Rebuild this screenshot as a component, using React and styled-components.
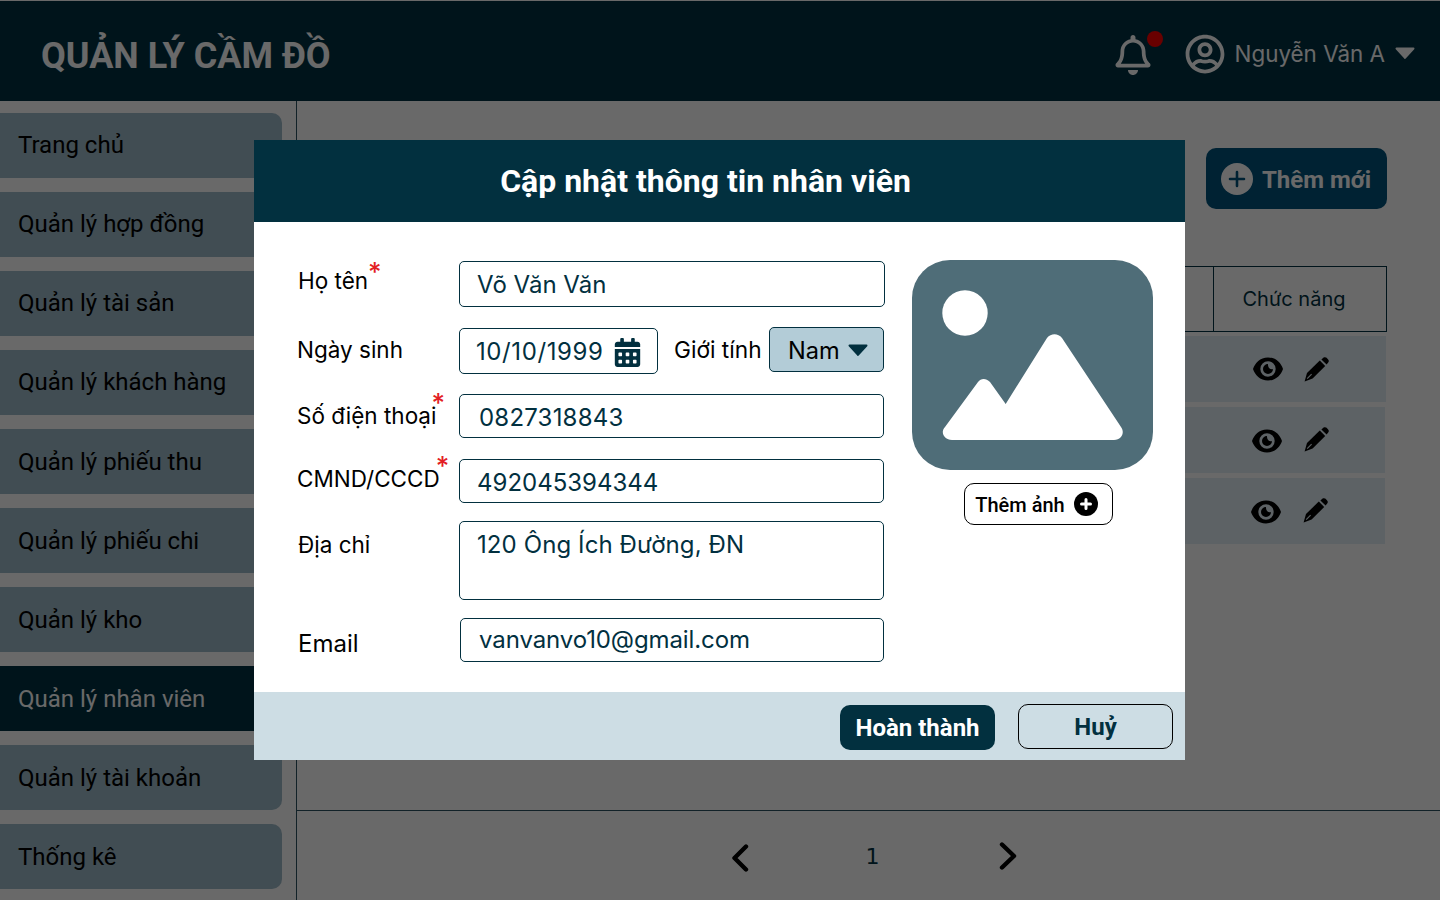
import React from "react";
import styled, { createGlobalStyle } from "styled-components";
import { FaRegBell, FaRegUserCircle, FaCalendarAlt } from "react-icons/fa";

const Global = createGlobalStyle`
  html, body { margin: 0; padding: 0; height: 900px; overflow: hidden; background: #fff; }
  * { box-sizing: border-box; }
  body { font-family: "Roboto", "Liberation Sans", sans-serif; }
`;
const Page = styled.div`
  position: relative; width: 1440px; height: 900px; overflow: hidden;
  display: flex; flex-direction: column; background: #fff;
`;
const TopBar = styled.header`
  height: 100px; margin-top: 1px; flex: none; background: #003142; color: #fff;
  display: flex; align-items: center; padding: 7px 25px 0 41px;
`;
const Brand = styled.div` font: 700 36px/1 "Roboto", sans-serif; flex: 1; margin-top: 2px; `;
const Bell = styled.div` position: relative; display: flex; width: 40px; margin-right: 32px; `;
const Dot = styled.span`
  position: absolute; left: 34px; top: -4px; width: 16px; height: 16px; border-radius: 50%; background: #ff0000;
`;
const UserName = styled.span`
  font: 400 22.4px/1 "Inter", sans-serif; margin: 2px 10px 0; white-space: nowrap;
`;
const UserBlock = styled.div` display: flex; align-items: center; margin-top: -2px; `;
const Body = styled.div` flex: 1; display: flex; min-height: 0; `;
const Side = styled.nav`
  width: 297px; flex: none; padding: 12px 14px 0 0; border-right: 1px solid #2d5362;
  display: flex; flex-direction: column; gap: 14px;
`;
const SideItem = styled.div`
  height: 65px; flex: none; padding: 0 18px ${p => (p.$lift ? 2 : 0)}px; display: flex; align-items: center;
  font: 400 24px/1 "Roboto", sans-serif; border-radius: 0 10px 10px 0;
  background: ${p => (p.$active ? "#003142" : "#9fbac9")};
  color: ${p => (p.$active ? "#fff" : "#000")};
`;
const Main = styled.main` flex: 1; display: flex; flex-direction: column; min-width: 0; `;
const Toolbar = styled.div` display: flex; justify-content: flex-end; padding: 47px 53px 0 0; `;
const AddBtn = styled.button`
  width: 181px; height: 61px; border: 0; border-radius: 10px; background: #00537c; color: #fff;
  display: flex; align-items: center; gap: 9px; padding: 0 15px;
  font: 700 24px/1 "Roboto", sans-serif;
`;
const AddLabel = styled.span` margin-top: 2px; `;
const Table = styled.div` margin: 57px 53px 0 43px; display: flex; flex-direction: column; `;
const HeadRow = styled.div`
  height: 66px; display: flex; border: 1px solid #003142; margin-bottom: 4px;
`;
const HeadCell = styled.div`
  flex: ${p => (p.$grow ? 1 : "none")}; width: ${p => (p.$grow ? "auto" : "173px")};
  border-left: ${p => (p.$grow ? "0" : "1px solid #003142")};
  display: flex; align-items: center; justify-content: center; padding-right: 12px;
  font: 400 20px/1 "Inter", sans-serif; color: #003142;
`;
const Row = styled.div`
  display: flex; align-items: center; justify-content: flex-end; background: #e1edf5;
  height: 66px; margin-right: ${p => p.$mr}px; margin-bottom: 5px;
`;
const Actions = styled.div`
  display: flex; align-items: center; gap: ${p => p.$gap}px; width: 172px; padding-left: ${p => p.$pl}px; color: #000;
`;
const IconSlot = styled.span` display: flex; margin-top: ${p => p.$top || 0}px; `;
const Pager = styled.footer`
  margin-top: auto; height: 90px; flex: none; border-top: 1px solid #2d5362;
  display: flex; align-items: center; justify-content: center; gap: 119px; padding: 0 0 0 11px; margin-left: -1px;
`;
const PageNum = styled.span` font: 400 22px/1 "DejaVu Sans", sans-serif; color: #003142; width: 10px; display: flex; justify-content: center; margin-top: 3px; `;
const PagerIcon = styled.span` display: flex; margin: ${p => p.$m}; `;

const Overlay = styled.div`
  position: absolute; inset: 0; background: rgba(0,0,0,.59); padding: 140px 255px 140px 254px; display: flex;
`;
const Modal = styled.section` flex: 1; display: flex; flex-direction: column; background: #fff; `;
const ModalHead = styled.h2`
  margin: 0; height: 82px; flex: none; background: #02303f; color: #fff;
  display: flex; align-items: center; justify-content: center; padding-right: 28px;
  font: 700 32px/1 "Roboto", sans-serif;
`;
const ModalBody = styled.div` flex: 1; display: flex; min-height: 0; `;
const Form = styled.div` width: 631px; flex: none; padding: 39px 0 0 43px; display: flex; flex-direction: column; `;
const FormRow = styled.div` display: flex; align-items: flex-start; margin-top: ${p => p.$mt || 0}px; `;
const Label = styled.label`
  width: 162px; flex: none; font: 400 ${p => p.$size || 22.5}px/29px "Inter", sans-serif; color: #000; white-space: nowrap;
  padding-top: ${p => p.$pt || 0}px; padding-left: ${p => p.$pl || 0}px;
`;
const Req = styled.span`
  color: #e31e24; font: 500 26px/1 "Inter", sans-serif; vertical-align: ${p => p.$up || 8}px; line-height: 0;
  margin-left: ${p => p.$ml || 0}px;
`;
const Field = styled.div`
  height: ${p => p.$h}px; width: ${p => p.$w}px; flex: none;
  margin-left: ${p => p.$ml || 0}px;
  border: 1px solid #02303f; border-radius: 5px; background: #fff; color: #02303f;
  display: flex; align-items: ${p => (p.$top ? "flex-start" : "center")};
  padding: ${p => p.$pad || "0 17px"};
  font: 400 24px/1 "Inter", sans-serif; white-space: nowrap;
  letter-spacing: ${p => p.$ls || 0}px;
`;
const DateField = styled(Field)` justify-content: space-between; `;
const CalendarIcon = styled(FaCalendarAlt)` margin: 1px -2px 0 0; `;
const GenderLabel = styled.span`
  font: 400 22.7px/29px "Inter", sans-serif; color: #000; margin-left: 16px; width: 95px; flex: none; padding-top: 7px;
`;
const Select = styled.div`
  width: 115px; height: 45px; margin-top: -1px; flex: none; border: 1px solid #02303f; border-radius: 5px;
  background: #b3ccd7; color: #000; display: flex; align-items: center; justify-content: space-between;
  padding: 2px 15px 0 18px; font: 400 23.6px/1 "Inter", sans-serif;
`;
const Aside = styled.aside`
  width: 241px; margin-left: 27px; padding-top: 38px; display: flex; flex-direction: column;
`;
const PhotoBtn = styled.button`
  margin: 13px 0 0 52px; width: 149px; height: 42px; border: 1px solid #000; border-radius: 10px; background: #fff; color: #000;
  display: flex; align-items: center; justify-content: center; gap: 9px;
  font: 500 20px/1 "Roboto", sans-serif; padding: 0 4px 0 0;
`;
const PhotoLabel = styled.span` margin-top: 2px; `;
const ModalFoot = styled.div`
  height: 68px; flex: none; background: #cddde4; display: flex; align-items: flex-start; justify-content: flex-end;
  padding: 12px 12px 0 0; gap: 23px;
`;
const Primary = styled.button`
  width: 155px; height: 45px; margin-top: 1px; border: 0; border-radius: 10px; background: #02303f; color: #fff;
  font: 700 24px/1 "Roboto", sans-serif; padding: 0;
`;
const Ghost = styled.button`
  width: 155px; height: 45px; border: 1px solid #000; border-radius: 10px; background: transparent; color: #02303f;
  font: 700 24px/1 "Roboto", sans-serif; padding: 0;
`;

const Caret = ({ w = 20, color = "currentColor" }) => (
  <svg width={w} height={w * 0.62} viewBox="0 0 20 12.4" fill={color} stroke={color} strokeWidth="2" strokeLinejoin="round">
    <path d="M1.5 1.5H18.5L10 10.9Z" />
  </svg>
);
const Chevron = ({ dir }) => (
  <svg width="18" height="28" viewBox="0 0 18 28" fill="none" stroke="#000" strokeWidth="4.4" strokeLinecap="round" strokeLinejoin="round">
    <path d={dir === "left" ? "M15 2.5L3.5 14L15 25.5" : "M3 2.5L15 14L3 25.5"} />
  </svg>
);
const Photo = () => (
  <svg width="241" height="210" viewBox="0 0 241 210">
    <rect width="241" height="210" rx="38" fill="#4f6d78" />
    <circle cx="53" cy="53" r="22.7" fill="#fff" />
    <path fill="#fff" d="M40 180H202C210 180 213 172 209 167L150 78C146 73 139 73 135 78L93.7 144L78 122C74 118 69 118 66 122L33 167C28 172 32 180 40 180Z" />
  </svg>
);
const PlusDisc = () => (
  <svg width="32" height="32" viewBox="0 0 32 32">
    <circle cx="16" cy="16" r="16" fill="#fff" />
    <path d="M16 9V23M9 16H23" stroke="#00537c" strokeWidth="2.6" strokeLinecap="round" />
  </svg>
);
const PlusSmall = () => (
  <svg width="24" height="24" viewBox="0 0 24 24">
    <circle cx="12" cy="12" r="12" fill="#000" />
    <path d="M12 7.5V16.5M7.5 12H16.5" stroke="#fff" strokeWidth="3" strokeLinecap="round" />
  </svg>
);
const Eye = () => (
  <svg width="30" height="24" viewBox="0 0 30 24" fill="currentColor">
    <path fillRule="evenodd" d="M15 0.5C23 0.5 28 6 30 12C28 18 23 23.5 15 23.5C7 23.5 2 18 0 12C2 6 7 0.5 15 0.5ZM15 4.3A7.7 7.7 0 1 0 15 19.7A7.7 7.7 0 1 0 15 4.3Z" />
    <path d="M15 7A5 5 0 1 0 20 12C18.8 12.6 17.2 12.2 16.3 11.2C15.3 10.2 14.9 8.4 15 7Z" />
  </svg>
);
const Pencil = () => (
  <svg width="25" height="25" viewBox="0 0 25 25" fill="currentColor">
    <path d="M0.6 24.4L3 16L15.8 3.6L21.2 9L8.6 21.6Z" />
    <path d="M17.4 2.4L19.6 0.6C20.6 -0.1 21.8 0 22.6 0.8L24.1 2.4C25 3.4 25 4.6 24.2 5.4L22.6 7.6Z" />
    <path d="M3.2 21.6L7.6 17.2" stroke="#e1edf5" strokeWidth="1.1" fill="none" />
  </svg>
);

const menu = ["Trang chủ", "Quản lý hợp đồng", "Quản lý tài sản", "Quản lý khách hàng", "Quản lý phiếu thu", "Quản lý phiếu chi", "Quản lý kho", "Quản lý nhân viên", "Quản lý tài khoản", "Thống kê"];
const rows = [
  { mr: 1, pl: 39, gap: 21, eye: 0, pen: 0 },
  { mr: 2, pl: 39, gap: 22, eye: 2, pen: -2 },
  { mr: 2, pl: 38, gap: 22, eye: 2, pen: -2 },
];

export default function App() {
  return (
    <Page>
      <Global />
      <TopBar>
        <Brand>QUẢN LÝ CẦM ĐỒ</Brand>
        <Bell><FaRegBell size={40} /><Dot /></Bell>
        <UserBlock>
          <FaRegUserCircle size={40} />
          <UserName>Nguyễn Văn A</UserName>
          <Caret />
        </UserBlock>
      </TopBar>
      <Body>
        <Side>
          {menu.map((m, i) => <SideItem key={m} $active={i === 7} $lift={i < 4}>{m}</SideItem>)}
        </Side>
        <Main>
          <Toolbar><AddBtn><PlusDisc /><AddLabel>Thêm mới</AddLabel></AddBtn></Toolbar>
          <Table>
            <HeadRow><HeadCell $grow /><HeadCell>Chức năng</HeadCell></HeadRow>
            {rows.map((r, i) => (
              <Row key={i} $mr={r.mr}>
                <Actions $pl={r.pl} $gap={r.gap}>
                  <IconSlot $top={r.eye}><Eye /></IconSlot>
                  <IconSlot $top={r.pen}><Pencil /></IconSlot>
                </Actions>
              </Row>
            ))}
          </Table>
          <Pager>
            <PagerIcon $m="5px 0 0"><Chevron dir="left" /></PagerIcon>
            <PageNum>1</PageNum>
            <PagerIcon $m="0 0 0 2px"><Chevron dir="right" /></PagerIcon>
          </Pager>
        </Main>
      </Body>
      <Overlay>
        <Modal>
          <ModalHead>Cập nhật thông tin nhân viên</ModalHead>
          <ModalBody>
            <Form>
              <FormRow>
                <Label $pt={5} $pl={1}>Họ tên<Req>*</Req></Label>
                <Field $w={426} $h={46} $pad="2px 17px 0">Võ Văn Văn</Field>
              </FormRow>
              <FormRow $mt={21}>
                <Label $pt={7}>Ngày sinh</Label>
                <DateField $w={199} $h={46} $pad="2px 17px 0 16px" $ls={0.6}>10/10/1999<CalendarIcon size={29} /></DateField>
                <GenderLabel>Giới tính</GenderLabel>
                <Select>Nam<Caret color="#02303f" /></Select>
              </FormRow>
              <FormRow $mt={20}>
                <Label $pt={7}>Số điện thoại<Req $up={12} $ml={-5}>*</Req></Label>
                <Field $w={425} $h={44} $pad="3px 19px 0" $ls={0.2}>0827318843</Field>
              </FormRow>
              <FormRow $mt={21}>
                <Label $pt={5}>CMND/CCCD<Req $up={12} $ml={-4}>*</Req></Label>
                <Field $w={425} $h={44} $pad="3px 17px 0">492045394344</Field>
              </FormRow>
              <FormRow $mt={18}>
                <Label $pt={9} $pl={1}>Địa chỉ</Label>
                <Field $w={425} $h={79} $top $pad="11px 17px" $ls={0.1}>120 Ông Ích Đường, ĐN</Field>
              </FormRow>
              <FormRow $mt={18}>
                <Label $pt={11} $pl={1} $size={24}>Email</Label>
                <Field $w={424} $h={44} $ml={1} $pad="0 18px" $ls={-0.1}>vanvanvo10@gmail.com</Field>
              </FormRow>
            </Form>
            <Aside>
              <Photo />
              <PhotoBtn><PhotoLabel>Thêm ảnh</PhotoLabel><PlusSmall /></PhotoBtn>
            </Aside>
          </ModalBody>
          <ModalFoot>
            <Primary>Hoàn thành</Primary>
            <Ghost>Huỷ</Ghost>
          </ModalFoot>
        </Modal>
      </Overlay>
    </Page>
  );
}
